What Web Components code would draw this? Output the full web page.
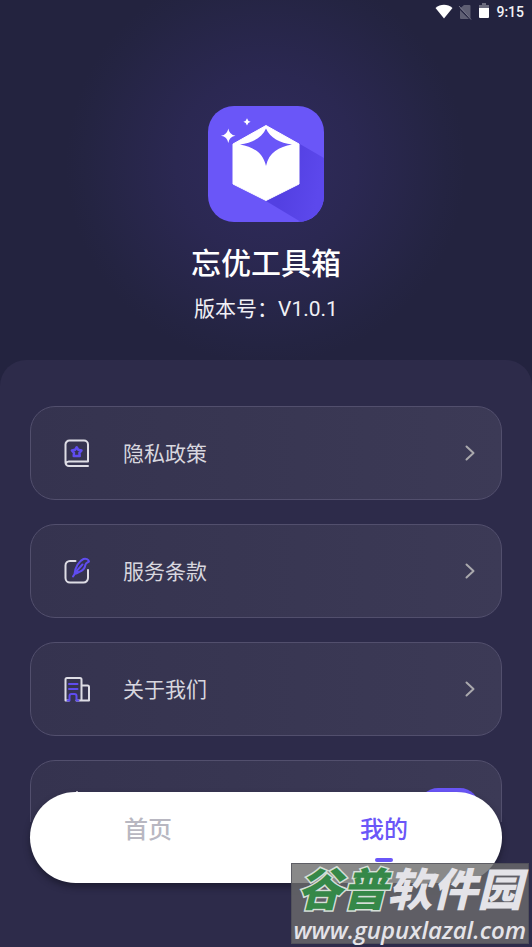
<!DOCTYPE html>
<html lang="zh-CN">
<head>
<meta charset="utf-8">
<meta name="viewport" content="width=device-width, initial-scale=1">
<title>忘优工具箱</title>
<style>
  html, body { margin: 0; height: 100%; }
  body {
    font-family: Roboto, "Noto Sans CJK SC", sans-serif;
    color: #fff;
    background: #23233f;
    --accent: #6a56f8;
    --sheet: #2d2b4a;
    --gutter: 30px;
  }
</style>
</head>
<body>
<app-shell>
  <status-bar slot="status" time="9:15"></status-bar>
  <app-hero slot="hero">
    <app-logo slot="logo"></app-logo>
    <span slot="name">忘优工具箱</span>
    <span slot="version">版本号：V1.0.1</span>
  </app-hero>
  <menu-card icon="book">隐私政策</menu-card>
  <menu-card icon="edit">服务条款</menu-card>
  <menu-card icon="building">关于我们</menu-card>
  <switch-card></switch-card>
  <tab-bar slot="tabs">
    <tab-item>首页</tab-item>
    <tab-item active>我的</tab-item>
  </tab-bar>
  <site-mark slot="mark">
    <span slot="lead">谷普</span>
    <span slot="rest">软件园</span>
    <span slot="url">www.gupuxlazal.com</span>
  </site-mark>
</app-shell>

<script>
const define = (name, html, setup) => {
  const template = document.createElement('template');
  template.innerHTML = html;
  customElements.define(name, class extends HTMLElement {
    connectedCallback() {
      if (this.shadowRoot) return;
      this.attachShadow({ mode: 'open' }).append(template.content.cloneNode(true));
      if (setup) setup(this, this.shadowRoot);
    }
  });
};

const icons = {
  book: `<path d="M25 27H6a3.500 3.500 0 0 1-3.500-3.500V5.500a4 4 0 0 1 4-4H21a4 4 0 0 1 4 4V22.500H6a3 3 0 0 0-3 2"/>
    <path class="accent" stroke-width="2.500" d="M13.700 8.200l1.600 2.600 3.200.7-2.100 2.400.3 3.100h-6l.3-3.100-2.100-2.400 3.200-.7z"/>`,
  edit: `<path d="M12.500 4H7a4.500 4.500 0 0 0-4.500 4.500V21A4.500 4.500 0 0 0 7 25.500h13.500A4.500 4.500 0 0 0 25 21v-8"/>
    <path class="accent" d="M10 19.500C12.500 15 16 11 19.500 7.500M11.500 17C12 10.500 16 4 20.500 2c2.500-.6 5 .2 5.500 2.500-1 1-3 1.500-3.500 3-.5 3-3 6.500-6.500 7.500-1.500.8-3 1.500-4.500 2z"/>`,
  building: `<path d="M6 25.500H2.500V4.500a1.500 1.500 0 0 1 1.500-1.500H17a1.500 1.500 0 0 1 1.500 1.500v21H13.500M18.500 10.500h6a1.500 1.500 0 0 1 1.500 1.500v13.500h-7.500"/>
    <path class="accent" d="M6 9h8.500M6 14h8.500M4.500 25.500h2V21a2 2 0 0 1 2-2h3a2 2 0 0 1 2 2v4.500h2"/>`,
  bell: `<path d="M14-1v4M5 22V12a9 9 0 0 1 18 0v10M3 22.500h22"/><path class="accent" d="M11 26h6"/>`
};

const cardStyle = `
  .card {
    box-sizing: border-box; width: 100%; min-height: 94px;
    display: flex; align-items: center; gap: 32px;
    padding: 0 26px 0 32px; margin: 0;
    border: 1px solid #524f6d; border-radius: 25px;
    background: linear-gradient(90deg, #35334f, #3c3a56);
    color: #d8d7df; font: inherit; font-size: 21px; line-height: 30px; text-align: left;
  }
  .icon { width: 28px; height: 28px; flex: none; overflow: visible; fill: none; stroke: #dedde5; stroke-width: 2; stroke-linecap: round; stroke-linejoin: round; }
  .accent { stroke: #5f4cf0; }
  .label { flex: 1; padding-top: 2px; }`;

define('app-shell', `
  <style>
    :host { display: flex; flex-direction: column; height: 100vh; position: relative; overflow: hidden;
      background: radial-gradient(circle at 50% 164px, #302b5c 0, #2b2852 90px, #242442 180px, #23233f 200px); }
    main { flex: 1; min-height: 0; display: flex; flex-direction: column; box-sizing: border-box;
      background: var(--sheet); border-radius: 26px 26px 0 0; padding: 46px var(--gutter) 125px; }
    .list { flex: 1; min-height: 0; overflow: hidden; display: flex; flex-direction: column; gap: 24px; }
    .tabs { position: absolute; left: var(--gutter); right: var(--gutter); bottom: 64px; }
    .mark { position: absolute; right: 3px; bottom: 3px; }
  </style>
  <slot name="status"></slot>
  <slot name="hero"></slot>
  <main><div class="list"><slot></slot></div></main>
  <div class="tabs"><slot name="tabs"></slot></div>
  <div class="mark"><slot name="mark"></slot></div>`);

define('status-bar', `
  <style>
    :host { display: flex; justify-content: flex-end; align-items: center; height: 24px; padding-right: 8px;
      font-size: 14px; font-weight: 500; line-height: 24px; color: #f2f2f6; }
    svg { height: 18px; display: block; }
    .wifi { width: 18px; margin-right: 5px; }
    .sim { width: 14px; margin-right: 7px; }
    .battery { width: 10px; margin-right: 7px; }
  </style>
  <svg class="wifi" viewBox="0 0 18 18"><path fill="#fff" d="M0.500 5C5.500.600 12.500.600 17.500 5L9 15.500z"/></svg>
  <svg class="sim" viewBox="0 0 14 18"><path fill="#5f5f73" d="M6 2h5.500q1 0 1 1v12.500L2 5.500zM2 7l9 9H3q-1 0-1-1z"/><path stroke="#77778a" d="M1 3l12 13.500"/></svg>
  <svg class="battery" viewBox="0 0 10 18"><path fill="#6b6b7e" d="M3 0h4v2h3v4H0V2h3z"/><path fill="#fff" d="M0 5h10v9q0 1-1 1H1q-1 0-1-1z"/></svg>
  <time></time>`, (host, root) => { root.querySelector('time').textContent = host.getAttribute('time'); });

define('app-hero', `
  <style>
    :host { display: flex; flex-direction: column; align-items: center; padding: 82px 16px 36px; }
    h1 { margin: 20px 0 8px; font-size: 30px; line-height: 44px; font-weight: 500; }
    p { margin: 0; font-size: 21px; line-height: 30px; color: #f0f0f5; }
  </style>
  <slot name="logo"></slot>
  <h1><slot name="name"></slot></h1>
  <p><slot name="version"></slot></p>`);

define('app-logo', `
  <style>
    :host { display: block; width: 116px; height: 116px; border-radius: 26px; overflow: hidden; background: var(--accent); }
    svg { display: block; width: 100%; height: 100%; }
  </style>
  <svg viewBox="0 0 116 116" aria-hidden="true">
    <defs><linearGradient id="shade" x1="0" y1="0" x2="1" y2="0.300"><stop offset=".4" stop-color="#5340e2"/><stop offset="1" stop-color="#5c48ec"/></linearGradient></defs>
    <path fill="url(#shade)" d="M91 37.500L116 52v64H93L58 95z"/>
    <path fill="#fff" stroke="#fff" stroke-linejoin="round" d="M58 19.500L91 38v40L58 94.500 25 78V38z"/>
    <path fill="#6a56f8" d="M58 22.500C62 32 72 37 84 38.500 71 41 61 46 58 60 55 46 45 41 32 38.500 44 37 54 32 58 22.500z"/>
    <path fill="#fff" d="M20.300 22.500q1 6.300 7.200 7.300-6.200 1-7.200 7.200-1-6.200-7.300-7.200 6.300-1 7.300-7.300zM39 12.200q.8 3 3.600 3.600-2.800.8-3.600 3.600-.8-2.800-3.600-3.600 2.800-.6 3.600-3.600z"/>
  </svg>`);

define('menu-card', `
  <style>
    :host { display: block; flex: none; }
    ${cardStyle}
    button { cursor: pointer; }
    .chevron { width: 10px; height: 16px; flex: none; fill: none; stroke: #aaa9ad; stroke-width: 2; stroke-linecap: round; stroke-linejoin: round; }
  </style>
  <button class="card" type="button">
    <svg class="icon" viewBox="0 0 28 28" aria-hidden="true"></svg>
    <span class="label"><slot></slot></span>
    <svg class="chevron" viewBox="0 0 10 16" aria-hidden="true"><path d="M1.500 1.500L8.500 8l-7 6.500"/></svg>
  </button>`, (host, root) => { root.querySelector('.icon').innerHTML = icons[host.getAttribute('icon')]; });

define('switch-card', `
  <style>
    :host { display: block; flex: none; }
    ${cardStyle}
    .card { padding-right: 22px; }
    input { appearance: none; width: 60px; height: 38px; margin: 0; border-radius: 19px; background: #3c3a56; }
    input:checked { background: var(--accent); }
  </style>
  <label class="card">
    <svg class="icon" viewBox="0 0 28 28" aria-hidden="true">${icons.bell}</svg>
    <span class="label"></span>
    <input type="checkbox" role="switch" aria-label="通知" checked>
  </label>`);

define('tab-bar', `
  <style>
    :host { display: block; }
    nav { display: flex; height: 91px; border-radius: 46px; background: #fff; box-shadow: 0 4px 6px rgba(20, 20, 35, .6); overflow: hidden; }
  </style>
  <nav><slot></slot></nav>`);

define('tab-item', `
  <style>
    :host { display: flex; flex: 1; }
    button { flex: 1; display: flex; flex-direction: column; align-items: center; gap: 10px; padding: 20px 0 0; margin: 0;
      border: 0; background: none; color: #b8b7c1; font: inherit; font-size: 24px; font-weight: 500; line-height: 36px; cursor: pointer; }
    button::after { content: ""; width: 18px; height: 4px; border-radius: 2px; }
    :host([active]) button { color: var(--accent); }
    :host([active]) button::after { background: var(--accent); }
  </style>
  <button type="button"><slot></slot></button>`);

define('site-mark', `
  <style>
    :host { display: block; box-sizing: border-box; padding: 2px 2px 0; background: rgba(108, 108, 108, .8);
      border: 1px solid rgba(75, 75, 85, .7); color: #e4e3e8; font-style: italic; text-align: center; white-space: nowrap; }
    .name { font-family: "Liberation Sans", "Noto Sans CJK SC", sans-serif; font-size: 45px; line-height: 50px; font-weight: 900; }
    .lead { color: #358848; -webkit-text-stroke: 3px #d5dfd8; paint-order: stroke fill; }
    .url { font-family: "Open Sans", sans-serif; font-size: 24px; line-height: 27px; font-weight: 600; }
  </style>
  <div class="name"><span class="lead"><slot name="lead"></slot></span><slot name="rest"></slot></div>
  <div class="url"><slot name="url"></slot></div>`);
</script>
</body>
</html>
